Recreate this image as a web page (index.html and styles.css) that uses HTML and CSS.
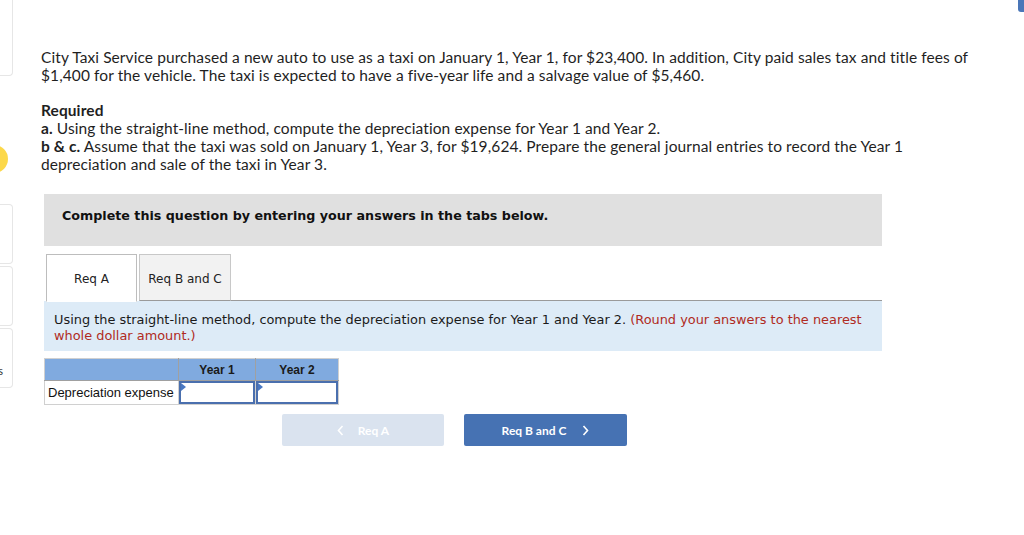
FILE: index.html
```html
<!DOCTYPE html>
<html lang="en">
<head>
<meta charset="utf-8">
<title>City Taxi Service</title>
<link rel="stylesheet" href="styles.css">
</head>
<body>
<div class="corner-tab"></div>
<div class="page">
  <aside class="rail">
    <div class="rail-card rail-card-top"></div>
    <div class="rail-dot"></div>
    <div class="rail-card"></div>
    <div class="rail-card"></div>
    <div class="rail-card"><span class="rail-text">s</span></div>
  </aside>
  <main class="content">
    <p class="intro">City Taxi Service purchased a new auto to use as a taxi on January 1, Year 1, for $23,400. In addition, City paid sales tax and title fees of $1,400 for the vehicle. The taxi is expected to have a five-year life and a salvage value of $5,460.</p>
    <div class="required">
      <div class="req-title">Required</div>
      <div><b>a.</b> Using the straight-line method, compute the depreciation expense for Year 1 and Year 2.</div>
      <div><b>b &amp; c.</b> Assume that the taxi was sold on January 1, Year 3, for $19,624. Prepare the general journal entries to record the Year 1 depreciation and sale of the taxi in Year 3.</div>
    </div>
    <section class="question">
      <div class="banner">Complete this question by entering your answers in the tabs below.</div>
      <div class="tabs">
        <div class="tab active">Req A</div>
        <div class="tab">Req B and C</div>
        <div class="tab-fill"></div>
      </div>
      <div class="instructions">Using the straight-line method, compute the depreciation expense for Year 1 and Year 2. <span class="hint">(Round your answers to the nearest whole dollar amount.)</span></div>
      <table class="grid">
        <thead>
          <tr>
            <th class="col-label"></th>
            <th class="col-y1">Year 1</th>
            <th class="col-y2">Year 2</th>
          </tr>
        </thead>
        <tbody>
          <tr>
            <td class="row-label">Depreciation expense</td>
            <td class="input-cell"><div class="field"></div></td>
            <td class="input-cell"><div class="field"></div></td>
          </tr>
        </tbody>
      </table>
      <div class="nav">
        <button class="nav-btn prev"><svg class="chev" width="7" height="11" viewBox="0 0 7 11"><path d="M5.5 1 L1.5 5.5 L5.5 10" fill="none" stroke="#ffffff" stroke-width="1.6"/></svg><span>Req A</span></button>
        <button class="nav-btn next"><span>Req B and C</span><svg class="chev chev-right" width="7" height="11" viewBox="0 0 7 11"><path d="M1.5 1 L5.5 5.5 L1.5 10" fill="none" stroke="#ffffff" stroke-width="1.6"/></svg></button>
      </div>
    </section>
  </main>
</div>
</body>
</html>
```

FILE: styles.css
```css
html, body {
  margin: 0;
  padding: 0;
  background: #ffffff;
}

body {
  font-family: "Lato", "Liberation Sans", sans-serif;
  color: #1f1f1f;
  overflow: hidden;
}

.corner-tab {
  position: fixed;
  top: 0;
  right: 0;
  width: 6px;
  height: 12px;
  background: #4a76b8;
  border-bottom-left-radius: 3px;
}

.page {
  display: flex;
  align-items: flex-start;
}

/* left rail (cut-off column) */
.rail {
  width: 13px;
  flex: none;
  display: flex;
  flex-direction: column;
  gap: 2px;
}

.rail-card {
  width: 12px;
  height: 58px;
  border: 1px solid #e6e6e6;
  border-left: none;
  border-radius: 0 4px 4px 0;
  display: flex;
  justify-content: flex-end;
  align-items: flex-start;
}

.rail-card-top {
  height: 75px;
  border-top: none;
  border-radius: 0 0 4px 0;
}

.rail-dot {
  width: 28px;
  height: 28px;
  border-radius: 50%;
  background: #fcd84a;
  margin: 67px 0 29px -20px;
}

.rail-text {
  font-size: 11px;
  line-height: 12px;
  color: #333;
  margin: 36px 9px 0 0;
}

/* main column */
.content {
  flex: 1;
  padding: 48px 0 0 28px;
}

.intro {
  width: 935px;
  margin: 0;
  font-size: 15.5px;
  letter-spacing: 0.09px;
  line-height: 18px;
}

.required {
  width: 935px;
  margin-top: 17px;
  font-size: 15.5px;
  letter-spacing: 0.09px;
  line-height: 18px;
}

.req-title {
  font-weight: 700;
}

.question {
  width: 838px;
  margin: 21px 0 0 3px;
  font-family: "DejaVu Sans", Verdana, sans-serif;
}

.banner {
  background: #e0e0e0;
  height: 52px;
  box-sizing: border-box;
  padding: 14px 0 0 18px;
  font-size: 12.7px;
  line-height: 15px;
  font-weight: 700;
  color: #111;
}

.tabs {
  display: flex;
  margin-top: 8px;
  padding-left: 2px;
  height: 47px;
}

.tab {
  width: 90px;
  height: 43px;
  padding-top: 2px;
  border: 1px solid #c8c8c8;
  border-bottom: 1px solid #9a9a9a;
  display: flex;
  align-items: center;
  justify-content: center;
  font-size: 12px;
  color: #222;
  background: #f2f2f2;
}

.tab.active {
  width: 89px;
  background: #ffffff;
  border-color: #bdbdbd;
  border-bottom-color: #ffffff;
  height: 44px;
}

.tab:not(.active) {
  margin-left: 2px;
}

.tab-fill {
  flex: 1;
  border-bottom: 1px solid #9a9a9a;
}

.instructions {
  background: #ddebf7;
  padding: 11px 10px 7px 10px;
  font-size: 12.9px;
  line-height: 16px;
  color: #1a1a1a;
}

.hint {
  color: #b02a22;
}

/* grid */
.grid {
  margin-top: 7px;
  border-collapse: collapse;
  font-family: "Liberation Sans", Arial, sans-serif;
  border: 1px solid #d0d0d0;
}

.grid th {
  background: #80aadf;
  height: 21px;
  padding: 0;
  border: 1px solid #a0a0a0;
  border-top-color: #d0d0d0;
  font-size: 12px;
  font-weight: 700;
  color: #1a1a1a;
  text-align: center;
}

.grid th.col-label {
  width: 133px;
  border-left-color: #d0d0d0;
}

.grid th.col-y1 {
  width: 76px;
}

.grid th.col-y2 {
  width: 82px;
  border-right-color: #d0d0d0;
}

.grid td {
  padding: 0;
  height: 23px;
  border: 1px solid #d0d0d0;
}

.row-label {
  font-size: 13px;
  padding-left: 3px !important;
  color: #111;
  white-space: nowrap;
}

.field {
  height: 19px;
  border: 2px solid #4a6fae;
  background: #fff;
  position: relative;
}

.field::before {
  content: "";
  position: absolute;
  left: 0;
  top: 0;
  border-top: 4px solid transparent;
  border-bottom: 4px solid transparent;
  border-left: 5px solid #4a78c2;
}

/* nav buttons */
.nav {
  display: flex;
  gap: 20px;
  margin: 9px 0 0 238px;
}

.nav-btn {
  width: 162px;
  height: 32px;
  border: none;
  border-radius: 2px;
  font-family: "Lato", "Liberation Sans", sans-serif;
  font-size: 12px;
  font-weight: 700;
  color: #ffffff;
  display: flex;
  align-items: center;
  justify-content: center;
  padding: 0;
}

.nav-btn.prev {
  background: #dae3ef;
}

.nav-btn.next {
  width: 163px;
  background: #4672b3;
}

.chev {
  margin-right: 14px;
}

.chev-right {
  margin-right: 0;
  margin-left: 16px;
}
```
